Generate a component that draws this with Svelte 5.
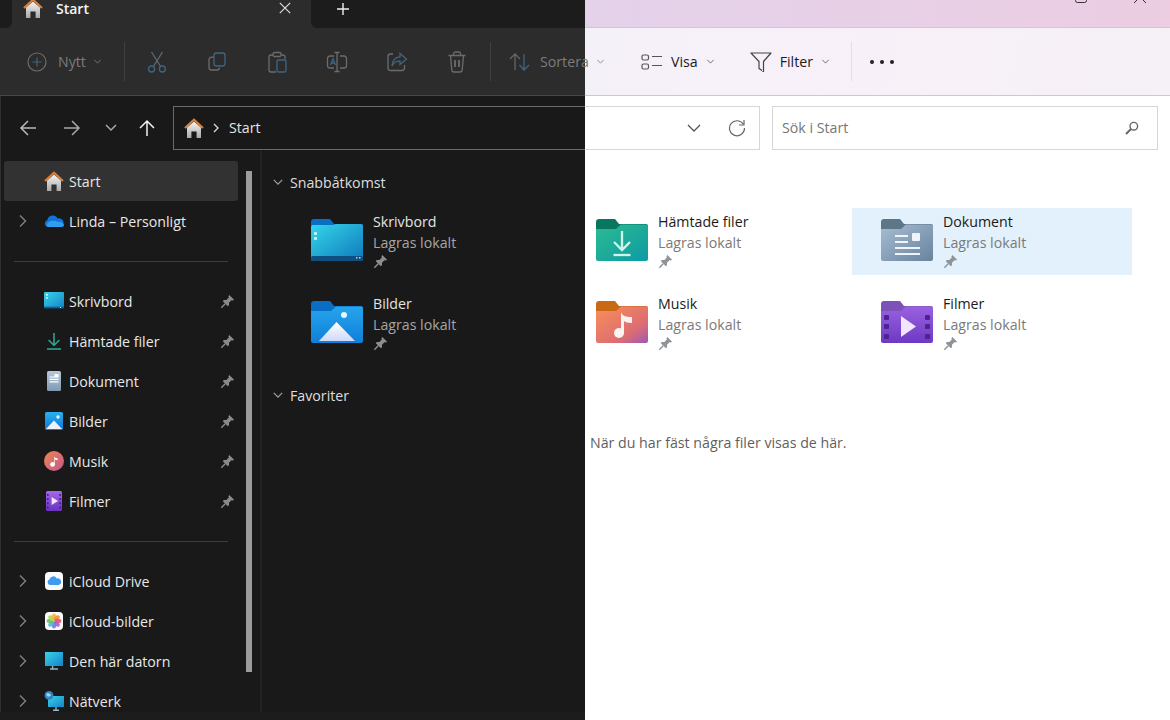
<script>
  const navTop = [
    { name: 'Start', icon: 'home', selected: true },
    { name: 'Linda – Personligt', icon: 'onedrive', expand: true }
  ]
  const navPinned = [
    { name: 'Skrivbord', icon: 'desktop' },
    { name: 'Hämtade filer', icon: 'download' },
    { name: 'Dokument', icon: 'document' },
    { name: 'Bilder', icon: 'pictures' },
    { name: 'Musik', icon: 'music' },
    { name: 'Filmer', icon: 'movies' }
  ]
  const navBottom = [
    { name: 'iCloud Drive', icon: 'icloud' },
    { name: 'iCloud-bilder', icon: 'photos' },
    { name: 'Den här datorn', icon: 'pc' },
    { name: 'Nätverk', icon: 'network' }
  ]
  const petals = ['#f6b73c', '#f58a3c', '#e8566b', '#b15fc4', '#6a7fe0', '#4fb7d8', '#62c26a', '#b8d44a']
  const toolPaths = ['cut', 'copy', 'paste', 'rename', 'share', 'delete']
</script>

{#snippet pin()}
  <svg class="pin" viewBox="0 0 16 16" width="15" height="15">
    <path d="M10 1 15 6 13.6 7 12.2 6.6 9.6 9.2 9.6 12 8.4 13 3 7.6 4 6.4 6.8 6.4 9.4 3.8 9 2.4Z" fill="currentColor" />
    <path d="M5.6 10.4 1.4 14.6" stroke="currentColor" stroke-width="1.5" />
  </svg>
{/snippet}

{#snippet chevron(size = 10)}
  <svg class="chev" viewBox="0 0 10 10" width={size} height={size}>
    <path d="M1.5 3.2 5 6.8 8.5 3.2" fill="none" stroke="currentColor" stroke-width="1" />
  </svg>
{/snippet}

{#snippet home(size = 20)}
  <svg viewBox="0 0 20 20" width={size} height={size}>
    <path d="M3 9.5 10 3.5 17 9.5V20H12.6V13.6H7.4V20H3Z" fill="url(#g-home)" />
    <path d="M1 10 10 1.8 19 10" fill="none" stroke="#d9813c" stroke-width="2.2" />
  </svg>
{/snippet}

{#snippet navIcon(name)}
  <svg viewBox="0 0 20 20" width="20" height="20">
    {#if name === 'home'}
      <path d="M3 9.5 10 3.5 17 9.5V20H12.6V13.6H7.4V20H3Z" fill="url(#g-home)" />
      <path d="M1 10 10 1.8 19 10" fill="none" stroke="#d9813c" stroke-width="2.2" />
    {:else if name === 'onedrive'}
      <path d="M4 16A3.6 3.6 0 0 1 3.4 9 5.4 5.4 0 0 1 13.6 7.6 4.4 4.4 0 0 1 16.6 16Z" fill="#1272d6" />
      <path d="M4 16A3 3 0 0 1 4.4 11C8 9 12 9.6 14 11 16 10.4 20 12 20 14.4 19.6 15.6 18 16 16.6 16Z" fill="#2f9ef0" />
    {:else if name === 'desktop'}
      <rect y="1" width="20" height="16" rx="1" fill="url(#g-desk)" />
      <rect y="15.6" width="20" height="1.8" fill="#0f5f96" />
      <rect x="2" y="3" width="2" height="1.6" fill="#d5f6fb" />
      <rect x="2" y="6" width="2" height="1.6" fill="#d5f6fb" />
      <rect x="16" y="16" width="1" height="1" fill="#cfefff" />
    {:else if name === 'download'}
      <path d="M10 2V14.4M4.6 9 10 14.4 15.4 9" fill="none" stroke="#2ea38f" stroke-width="1.6" />
      <path d="M3 18H17" stroke="#2ea38f" stroke-width="1.6" />
    {:else if name === 'document'}
      <rect x="3" y="0" width="14" height="20" rx="1.5" fill="url(#g-doc)" />
      <path d="M5.5 6H14.5M5.5 8.4H14.5M5.5 10.8H14.5" stroke="#fff" stroke-width="1.2" />
      <rect x="10.5" y="3" width="4" height="3" fill="#fff" />
    {:else if name === 'pictures'}
      <rect x="1" y="1" width="18" height="18" rx="1.5" fill="url(#g-pic)" />
      <circle cx="14" cy="6" r="1.7" fill="#e8f6ff" />
      <path d="M2 18 10 9.6 18 18Z" fill="#eef0ff" />
    {:else if name === 'music'}
      <circle cx="10" cy="10" r="10" fill="url(#g-music)" />
      <circle cx="8.6" cy="13.4" r="2.4" fill="#fff" />
      <path d="M10.2 13V5.4C11 7 12.8 7.2 13.6 7.2V9C12.4 9 11 8.6 10.8 8V13Z" fill="#fff" />
    {:else if name === 'movies'}
      <rect x="2" y="0" width="16" height="20" rx="1.5" fill="url(#g-film)" />
      <path d="M7.6 6 14 10 7.6 14Z" fill="#f3e6ff" />
      {#each [3, 7.2, 11.4, 15.6] as y}
        <rect x="3" {y} width="1.6" height="1.8" fill="#40197f" />
        <rect x="15.4" {y} width="1.6" height="1.8" fill="#40197f" />
      {/each}
    {:else if name === 'icloud'}
      <rect x="1" y="1" width="18" height="18" rx="4" fill="#fbfbfd" />
      <path d="M6 14A2.8 2.8 0 0 1 5.4 8.6 4 4 0 0 1 12.8 7.4 3.4 3.4 0 0 1 14.6 14Z" fill="#3f9bf0" />
    {:else if name === 'photos'}
      <rect x="1" y="1" width="18" height="18" rx="4" fill="#fbfbfd" />
      {#each petals as color, i}
        <ellipse cx="10" cy="6" rx="2.2" ry="3.4" fill={color} opacity="0.9" transform="rotate({i * 45} 10 10)" />
      {/each}
    {:else if name === 'pc'}
      <rect x="1" y="1" width="18" height="14" fill="url(#g-desk)" />
      <path d="M8.6 15V17.4M6 18H14" stroke="#8fb8c9" stroke-width="1.4" />
    {:else if name === 'network'}
      <rect x="4" y="5" width="16" height="11" fill="url(#g-desk)" />
      <path d="M12 16V18.5M9 19.2H15" stroke="#8fb8c9" stroke-width="1.4" />
      <circle cx="5" cy="4.4" r="4.4" fill="#2f87c8" />
      <path d="M2.4 2.6C4 2 6 2.4 7 4 6 6 4 6 2.8 5Z" fill="#9fd3ee" />
    {/if}
  </svg>
{/snippet}

{#snippet tool(name)}
  <svg viewBox="0 0 24 24" width="24" height="24" fill="none" stroke="#6c6c6c" stroke-width="1.3">
    {#if name === 'cut'}
      <path d="M6.5 2 15.6 16.5M17.5 2 8.4 16.5" stroke="#5e6b75" />
      <circle cx="6.6" cy="19" r="3" stroke="#3f6580" />
      <circle cx="17.4" cy="19" r="3" stroke="#3f6580" />
    {:else if name === 'copy'}
      <rect x="9" y="3" width="11" height="13" rx="2.5" stroke="#3f6580" />
      <path d="M9 7.2H6.5A2.5 2.5 0 0 0 4 9.7V17.5A2.5 2.5 0 0 0 6.5 20H12A2.5 2.5 0 0 0 14.4 17.6" />
    {:else if name === 'paste'}
      <path d="M8 5H6A2 2 0 0 0 4 7V20A2 2 0 0 0 6 22H11M16 5H18A2 2 0 0 1 20 7V9" />
      <rect x="8" y="2.5" width="8" height="4" rx="1.5" />
      <rect x="12" y="10" width="9" height="12" rx="1.5" stroke="#3f6580" />
    {:else if name === 'rename'}
      <path d="M9 6H5A2.5 2.5 0 0 0 2.500 8.500V15.500A2.500 2.500 0 0 0 5 18H9M15 6H19A2.500 2.500 0 0 1 21.500 8.500V15.500A2.500 2.500 0 0 1 19 18H15" />
      <path d="M12 3V21M9.500 2.500H14.500M9.500 21.500H14.500" />
      <path d="M5.500 15 8 8.800 10.500 15M6.400 13H9.600" stroke="#3f6580" />
    {:else if name === 'share'}
      <path d="M8 4H5.500A2.500 2.500 0 0 0 3 6.500V18A2.500 2.500 0 0 0 5.500 20.500H17A2.500 2.500 0 0 0 19.500 18V15" />
      <path d="M15 3.500 21.500 9 15 14.500V11.200C11 11 8.500 13 7 16 7 11 10 7 15 6.800Z" stroke="#3f6580" />
    {:else if name === 'delete'}
      <path d="M3.500 5.500H20.500M8.500 5.500V4A2 2 0 0 1 10.500 2H13.500A2 2 0 0 1 15.500 4V5.500" />
      <path d="M5.500 5.500 6.800 20A2.200 2.200 0 0 0 9 22H15A2.200 2.200 0 0 0 17.200 20L18.500 5.500" />
      <path d="M10 10V17M14 10V17" stroke-width="1.800" />
    {/if}
  </svg>
{/snippet}

{#snippet folder(kind)}
  <svg viewBox="0 0 52 42" width="52" height="42">
    {#if kind === 'desk'}
      <path d="M0 3A3 3 0 0 1 3 0H19L23 5H50A2 2 0 0 1 52 7V24H0Z" fill="#0a6fc4" />
      <path d="M0 8A2 2 0 0 1 2 6H22L25 5H50A2 2 0 0 1 52 7V40A2 2 0 0 1 50 42H2A2 2 0 0 1 0 40Z" fill="url(#g-fdesk)" />
      <rect y="37" width="52" height="5" rx="2" fill="#0e4f80" />
      <rect x="3" y="13" width="3" height="3" rx="1" fill="#c7f3fa" />
      <rect x="3" y="18" width="3" height="3" rx="1" fill="#c7f3fa" />
      <rect x="45" y="38" width="1.500" height="1.500" fill="#a5e2f5" />
      <rect x="48" y="38" width="1.500" height="1.500" fill="#a5e2f5" />
    {:else if kind === 'pic'}
      <path d="M0 3A3 3 0 0 1 3 0H19L23 5H50A2 2 0 0 1 52 7V24H0Z" fill="#0a6fc4" />
      <path d="M0 10H20L25 5.500H50A2 2 0 0 1 52 7.500V40A2 2 0 0 1 50 42H2A2 2 0 0 1 0 40Z" fill="url(#g-fpic)" />
      <circle cx="33" cy="14" r="3" fill="#e6f5ff" />
      <path d="M8 40 25.500 21 44 40Z" fill="url(#g-mount)" />
    {:else if kind === 'down'}
      <path d="M0 3A3 3 0 0 1 3 0H19L23 5H50A2 2 0 0 1 52 7V24H0Z" fill="#07785f" />
      <path d="M0 10H20L25 5.500H50A2 2 0 0 1 52 7.500V40A2 2 0 0 1 50 42H2A2 2 0 0 1 0 40Z" fill="url(#g-fdown)" />
      <path d="M26 12V31M18 23 26 31 34 23" fill="none" stroke="#cdf5ec" stroke-width="2.300" />
      <path d="M17.500 36H34.500" stroke="#cdf5ec" stroke-width="2.300" />
    {:else if kind === 'music'}
      <path d="M0 3A3 3 0 0 1 3 0H19L23 5H50A2 2 0 0 1 52 7V24H0Z" fill="#c86a14" />
      <path d="M0 10H20L25 5.500H50A2 2 0 0 1 52 7.500V40A2 2 0 0 1 50 42H2A2 2 0 0 1 0 40Z" fill="url(#g-fmusic)" />
      <circle cx="23" cy="32" r="5" fill="#fbf3f1" />
      <path d="M25 32V11C26 15 30 16 36 16V22C32 22 29 21 28 20V32Z" fill="#fbf3f1" />
    {:else if kind === 'doc'}
      <path d="M0 3A3 3 0 0 1 3 0H19L23 5H50A2 2 0 0 1 52 7V24H0Z" fill="#5d7688" />
      <path d="M0 10H20L25 5.500H50A2 2 0 0 1 52 7.500V40A2 2 0 0 1 50 42H2A2 2 0 0 1 0 40Z" fill="url(#g-fdoc)" />
      <path d="M14 17H27M14 23H27M14 29H39M14 35H39" stroke="#eef4f9" stroke-width="2" />
      <rect x="31" y="14" width="8" height="8" rx="1" fill="#eef4f9" />
    {:else if kind === 'film'}
      <path d="M0 3A3 3 0 0 1 3 0H19L23 5H50A2 2 0 0 1 52 7V24H0Z" fill="#7c52b8" />
      <path d="M0 10H20L25 5.500H50A2 2 0 0 1 52 7.500V40A2 2 0 0 1 50 42H2A2 2 0 0 1 0 40Z" fill="url(#g-ffilm)" />
      <path d="M20 15 35 25.500 20 36Z" fill="#f1e6ff" />
      {#each [14, 23, 33] as y}
        <rect x="3" {y} width="5" height="5" rx="1" fill="#4a2590" />
        <rect x="44" {y} width="5" height="5" rx="1" fill="#4a2590" />
      {/each}
    {/if}
  </svg>
{/snippet}

{#snippet tile(kind, name)}
  <div class="tile">
    {@render folder(kind)}
    <div class="tile-text">
      <div class="tile-name">{name}</div>
      <div class="tile-sub">Lagras lokalt</div>
      <div class="tile-pin">{@render pin()}</div>
    </div>
  </div>
{/snippet}

{#snippet navRow(item, pinned)}
  <div class="nav-row" class:selected={item.selected}>
    <span class="expander">
      {#if item.expand}
        <svg viewBox="0 0 10 14" width="10" height="14"><path d="M2 1.500 7.500 7 2 12.500" fill="none" stroke="#7d7d7d" stroke-width="1.500" /></svg>
      {/if}
    </span>
    {@render navIcon(item.icon)}
    <span class="nav-name">{item.name}</span>
    {#if pinned}{@render pin()}{/if}
  </div>
{/snippet}

<svg class="defs" width="0" height="0" aria-hidden="true">
  <defs>
    <linearGradient id="g-home" x1="0" y1="0" x2="0" y2="1"><stop offset="0" stop-color="#f4f4f4" /><stop offset="1" stop-color="#a9a9a9" /></linearGradient>
    <linearGradient id="g-desk" x1="0" y1="0" x2="1" y2="1"><stop offset="0" stop-color="#38d3e8" /><stop offset="1" stop-color="#1484c8" /></linearGradient>
    <linearGradient id="g-doc" x1="0" y1="0" x2="0" y2="1"><stop offset="0" stop-color="#b6c8da" /><stop offset="1" stop-color="#7f9ab2" /></linearGradient>
    <linearGradient id="g-pic" x1="0" y1="0" x2="0" y2="1"><stop offset="0" stop-color="#29b0f0" /><stop offset="1" stop-color="#0d78d2" /></linearGradient>
    <linearGradient id="g-music" x1="0" y1="0" x2="1" y2="1"><stop offset="0" stop-color="#f0854e" /><stop offset="1" stop-color="#c05a90" /></linearGradient>
    <linearGradient id="g-film" x1="0" y1="0" x2="0" y2="1"><stop offset="0" stop-color="#a468e8" /><stop offset="1" stop-color="#6a32c0" /></linearGradient>
    <linearGradient id="g-fdesk" x1="0" y1="0" x2="1" y2="1"><stop offset="0" stop-color="#35d6ea" /><stop offset="1" stop-color="#0e78bc" /></linearGradient>
    <linearGradient id="g-fpic" x1="0" y1="0" x2="0" y2="1"><stop offset="0" stop-color="#27a4ec" /><stop offset="1" stop-color="#0f7fd8" /></linearGradient>
    <linearGradient id="g-mount" x1="0" y1="0" x2="0" y2="1"><stop offset="0" stop-color="#ffffff" /><stop offset="1" stop-color="#cfd9f8" /></linearGradient>
    <linearGradient id="g-fdown" x1="0" y1="0" x2="1" y2="1"><stop offset="0" stop-color="#2dbb91" /><stop offset="1" stop-color="#0d9aa4" /></linearGradient>
    <linearGradient id="g-fmusic" x1="0" y1="0" x2="1" y2="1"><stop offset="0" stop-color="#f98f57" /><stop offset="0.7" stop-color="#dc6c74" /><stop offset="1" stop-color="#9c58b4" /></linearGradient>
    <linearGradient id="g-fdoc" x1="0" y1="0" x2="1" y2="1"><stop offset="0" stop-color="#a9bdd2" /><stop offset="1" stop-color="#66839e" /></linearGradient>
    <linearGradient id="g-ffilm" x1="0" y1="0" x2="0" y2="1"><stop offset="0" stop-color="#9a62e0" /><stop offset="1" stop-color="#6d38c4" /></linearGradient>
  </defs>
</svg>

<div class="window">
  <section class="pane dark">
    <div class="tabbar">
      <div class="tab-gutter"></div>
      <div class="tab">
        {@render home(20)}
        <span class="tab-title">Start</span>
        <svg class="tab-close" viewBox="0 0 12 12" width="12" height="12"><path d="M.8.8 11.200 11.200M11.200.8.8 11.200" stroke="#e4e4e4" stroke-width="1.100" /></svg>
      </div>
      <div class="tab-rest">
        <svg class="tab-add" viewBox="0 0 12 12" width="12" height="12"><path d="M6 0V12M0 6H12" stroke="#f0f0f0" stroke-width="1.400" /></svg>
      </div>
    </div>

    <div class="toolbar">
      <div class="new-btn">
        <svg viewBox="0 0 20 20" width="20" height="20" fill="none">
          <circle cx="10" cy="10" r="9" stroke="#6c6c6c" stroke-width="1.200" />
          <path d="M10 5.500V14.500M5.500 10H14.500" stroke="#3f6580" stroke-width="1.200" />
        </svg>
        <span>Nytt</span>
        {@render chevron(9)}
      </div>
      <div class="sep"></div>
      {#each toolPaths as name}
        <div class="tool">{@render tool(name)}</div>
      {/each}
      <div class="sep"></div>
      <div class="sort-btn">
        <svg viewBox="0 0 22 20" width="22" height="20" fill="none" stroke-width="1.300">
          <path d="M6 18V2M1 7 6 2 11 7" stroke="#666" />
          <path d="M15 2V18M10.500 13 15 18 20 13" stroke="#3f6580" />
        </svg>
        <span>Sortera</span>
      </div>
    </div>

    <div class="addressrow">
      <div class="nav-buttons">
        <svg viewBox="0 0 18 18" width="18" height="18" fill="none" stroke="#b8b8b8" stroke-width="1.500"><path d="M17 9H2M9 2 2 9 9 16" /></svg>
        <svg class="fwd" viewBox="0 0 18 18" width="18" height="18" fill="none" stroke="#a8a8a8" stroke-width="1.500"><path d="M1 9H16M9 2 16 9 9 16" /></svg>
        <svg class="recent" viewBox="0 0 12 8" width="12" height="8" fill="none" stroke="#a8a8a8" stroke-width="1.500"><path d="M1 1 6 6 11 1" /></svg>
        <svg class="up" viewBox="0 0 18 18" width="18" height="18" fill="none" stroke="#f2f2f2" stroke-width="1.500"><path d="M9 17V2M2 9 9 2 16 9" /></svg>
      </div>
      <div class="crumbs">
        {@render home(20)}
        <svg class="crumb-sep" viewBox="0 0 6 10" width="6" height="10" fill="none" stroke="#dcdcdc" stroke-width="1.300"><path d="M1 1 5 5 1 9" /></svg>
        <span>Start</span>
      </div>
    </div>

    <div class="content">
      <aside class="sidebar">
        <div class="nav">
          {#each navTop as item}{@render navRow(item, false)}{/each}
          <div class="nav-divider first"></div>
          {#each navPinned as item}{@render navRow(item, true)}{/each}
          <div class="nav-divider"></div>
          {#each navBottom as item}{@render navRow({ ...item, expand: true }, false)}{/each}
        </div>
        <div class="scrollbar"></div>
      </aside>

      <main class="main">
        <div class="section-head">{@render chevron(12)}<span>Snabbåtkomst</span></div>
        <div class="tiles-left">
          {@render tile('desk', 'Skrivbord')}
          {@render tile('pic', 'Bilder')}
        </div>
        <div class="section-head favorites">{@render chevron(12)}<span>Favoriter</span></div>
      </main>
    </div>
    <div class="statusbar"></div>
  </section>

  <section class="pane light">
    <div class="tabbar">
      <svg class="win-max" viewBox="0 0 12 3" width="12" height="3"><path d="M.5 0V.5A2 2 0 0 0 2.500 2.500H9.500A2 2 0 0 0 11.500.5V0" fill="none" stroke="#333" /></svg>
      <svg class="win-close" viewBox="0 0 12 3" width="12" height="3"><path d="M3 0 0 3M9 0 12 3" stroke="#333" /></svg>
    </div>

    <div class="toolbar">
      <span class="sort-chev">{@render chevron(9)}</span>
      <div class="btn view">
        <svg viewBox="0 0 22 18" width="22" height="18" fill="none" stroke="#555" stroke-width="1.200">
          <rect x="1" y="2" width="6.500" height="5" rx="1.500" />
          <rect x="1" y="11" width="6.500" height="5" rx="1.500" />
          <path d="M11 3.500H21M11 12.500H21" />
        </svg>
        <span>Visa</span>
        {@render chevron(9)}
      </div>
      <div class="btn filter">
        <svg viewBox="0 0 22 22" width="22" height="22" fill="none" stroke="#444" stroke-width="1.200"><path d="M1 2H21L13.500 10.500V20.500L9 17.500V10.500Z" stroke-linejoin="round" /></svg>
        <span>Filter</span>
        {@render chevron(9)}
      </div>
      <div class="sep"></div>
      <div class="more"><i></i><i></i><i></i></div>
    </div>

    <div class="addressrow">
      <div class="address-end">
        <svg viewBox="0 0 14 8" width="14" height="8" fill="none" stroke="#555" stroke-width="1.300"><path d="M1 1 7 7 13 1" /></svg>
        <svg class="refresh" viewBox="0 0 18 18" width="18" height="18" fill="none" stroke="#666" stroke-width="1.200"><path d="M15.500 5.500A7.500 7.500 0 1 0 16.500 9" /><path d="M16 1V6H11" /></svg>
      </div>
      <div class="search">
        <span>Sök i Start</span>
        <svg viewBox="0 0 14 14" width="14" height="14" fill="none" stroke="#666" stroke-width="1.400"><circle cx="8.800" cy="5.200" r="3.800" /><path d="M6 8 1 13" stroke-width="2" /></svg>
      </div>
    </div>

    <div class="tiles-right">
      {@render tile('down', 'Hämtade filer')}
      <div class="highlight">{@render tile('doc', 'Dokument')}</div>
      {@render tile('music', 'Musik')}
      <div>{@render tile('film', 'Filmer')}</div>
    </div>
    <p class="empty">När du har fäst några filer visas de här.</p>
  </section>
</div>

<style>
  :global(body) {
    margin: 0;
    background: #fff;
    overflow: hidden;
  }

  .defs {
    position: absolute;
  }

  svg {
    display: block;
    flex: none;
  }

  .window {
    display: flex;
    width: 1170px;
    height: 720px;
    overflow: hidden;
    font-family: "Open Sans", Roboto, sans-serif;
    font-size: 14.2px;
  }

  .pane {
    display: flex;
    flex-direction: column;
    min-width: 0;
  }

  .dark {
    width: 585px;
    flex: none;
    position: relative;
    z-index: 1;
    background: #191919;
    color: #e4e4e4;
    box-shadow: inset 1px 0 #2e2e33;
  }

  .light {
    flex: 1;
    background: #fff;
    color: #1b1b1b;
  }

  .tabbar {
    height: 28px;
    flex: none;
    display: flex;
    overflow: hidden;
  }

  .dark .tabbar {
    background: #2c2c2c;
  }

  .light .tabbar {
    background: linear-gradient(90deg, #e4d2ea, #e8d0e6 55%, #eccde2);
    border-bottom: 1px solid #d5c4d4;
    box-sizing: border-box;
    justify-content: flex-end;
  }

  .tab-gutter {
    width: 12px;
    flex: none;
    background: #1c1c1c;
    border-bottom-right-radius: 6px;
  }

  .tab {
    width: 299px;
    flex: none;
    box-sizing: border-box;
    padding: 0 20px 12px 11px;
    display: flex;
    align-items: center;
  }

  .tab-rest {
    flex: 1;
    background: #1c1c1c;
    border-bottom-left-radius: 6px;
    padding: 3px 0 0 26px;
  }

  .tab-title {
    margin-left: 13px;
    font-weight: 600;
    font-size: 14px;
    color: #f4f4f4;
  }

  .tab-close {
    margin-left: auto;
  }

  .toolbar {
    height: 68px;
    flex: none;
    box-sizing: border-box;
    display: flex;
    align-items: center;
    border-bottom: 1px solid #48484a;
  }

  .dark .toolbar {
    background: #2c2c2c;
    color: #7c7c7c;
    padding-left: 27px;
  }

  .light .toolbar {
    background: linear-gradient(100deg, #f5f1f8, #f8f0f8 50%, #f5f1f6);
    border-bottom-color: #cbc8ce;
  }

  .new-btn {
    display: flex;
    align-items: center;
    width: 97px;
    flex: none;
  }

  .new-btn span {
    margin-left: 11px;
  }

  .new-btn :global(.chev) {
    margin-left: 7px;
  }

  .sep {
    width: 1px;
    height: 39px;
    flex: none;
    background: #404040;
  }

  .light .sep {
    background: #e3dfe6;
    margin-left: 21px;
  }

  .tool {
    width: 60px;
    display: flex;
    justify-content: center;
    flex: none;
  }

  .sep + .tool {
    margin-left: 2px;
  }

  .tool + .sep {
    margin-left: 3px;
  }

  .sort-btn {
    display: flex;
    align-items: center;
    white-space: nowrap;
    margin-left: 18px;
  }

  .sort-btn span {
    margin-left: 9px;
  }

  .sort-chev {
    margin-left: 11px;
    color: #888;
  }

  .btn {
    display: flex;
    align-items: center;
    gap: 8px;
  }

  .btn :global(.chev) {
    color: #666;
  }

  .view {
    margin-left: 36px;
  }

  .filter {
    margin-left: 35px;
  }

  .more {
    margin-left: 18px;
    display: flex;
    gap: 6px;
  }

  .more i {
    width: 4px;
    height: 4px;
    border-radius: 50%;
    background: #222;
  }

  .addressrow {
    height: 54px;
    flex: none;
    box-sizing: border-box;
    padding-top: 10px;
    display: flex;
  }

  .nav-buttons {
    width: 173px;
    flex: none;
    height: 44px;
    box-sizing: border-box;
    padding-left: 19px;
    display: flex;
    align-items: center;
  }

  .fwd {
    margin-left: 26px;
  }

  .recent {
    margin-left: 24px;
  }

  .up {
    margin-left: 21px;
  }

  .crumbs {
    flex: 1;
    height: 44px;
    box-sizing: border-box;
    border: 1px solid #6a6a6a;
    border-right: 0;
    padding-left: 10px;
    display: flex;
    align-items: center;
  }

  .crumb-sep {
    margin-left: 9px;
  }

  .crumbs span {
    margin: -1px 0 0 10px;
  }

  .address-end {
    width: 175px;
    height: 44px;
    flex: none;
    box-sizing: border-box;
    border: 1px solid #d6d6d6;
    border-left: 0;
    padding-left: 102px;
    display: flex;
    align-items: center;
  }

  .refresh {
    margin-left: 27px;
  }

  .search {
    width: 386px;
    height: 44px;
    margin-left: 12px;
    box-sizing: border-box;
    border: 1px solid #d6d6d6;
    padding: 0 18px 0 9px;
    display: flex;
    align-items: center;
    justify-content: space-between;
    color: #767676;
  }

  .search span {
    margin-top: -1px;
  }

  .content {
    flex: 1;
    min-height: 0;
    display: flex;
    overflow: hidden;
  }

  .statusbar {
    height: 8px;
    flex: none;
    background: #1c1c1c;
  }

  .sidebar {
    width: 262px;
    flex: none;
    box-sizing: border-box;
    padding: 11px 0 0 4px;
    display: flex;
    border-right: 2px solid #212121;
  }

  .nav {
    width: 234px;
    flex: none;
  }

  .nav-row {
    height: 40px;
    display: flex;
    align-items: center;
    padding-right: 3px;
    box-sizing: border-box;
    color: #e8e8e8;
  }

  .nav-row.selected {
    background: #323232;
    border-radius: 3px;
  }

  .expander {
    width: 40px;
    flex: none;
    padding-left: 14px;
    box-sizing: border-box;
  }

  .nav-name {
    flex: 1;
    margin-left: 5px;
    white-space: nowrap;
  }

  .nav :global(.pin) {
    color: #8a8a8a;
  }

  .nav-divider {
    height: 1px;
    margin: 20px 10px 19px 10px;
    background: #3d3d3d;
  }

  .scrollbar {
    width: 6px;
    height: 501px;
    margin: 10px 0 0 8px;
    background: #9c9c9c;
  }

  .main {
    flex: 1;
    padding: 22px 0 0 10px;
    min-width: 0;
  }

  .section-head {
    display: flex;
    align-items: center;
    gap: 6px;
    height: 20px;
    color: #dedede;
  }

  .section-head :global(.chev) {
    color: #a0a0a0;
  }

  .favorites {
    margin-top: 28px;
  }

  .tiles-left {
    margin: 16px 0 0 10px;
    display: flex;
    flex-direction: column;
    gap: 15px;
  }

  .tile {
    height: 67px;
    box-sizing: border-box;
    padding: 3px 0 0 29px;
    display: flex;
    gap: 10px;
  }

  .tile > :global(svg) {
    margin-top: 8px;
  }

  .tile-text {
    line-height: 21px;
  }

  .tile-sub {
    color: #a6a6a6;
  }

  .tile-pin {
    color: #8e8e8e;
    padding-top: 1px;
  }

  .light .tile-name {
    color: #1a1a1a;
  }

  .light .tile-sub {
    color: #7a7a7a;
  }

  .light .tile-pin {
    color: #8f9498;
  }

  .tiles-right {
    margin-top: 58px;
    display: grid;
    grid-template-columns: 262px 280px;
    grid-auto-rows: 67px;
    row-gap: 15px;
    column-gap: 5px;
  }

  .tiles-right > :global(.tile) {
    padding-left: 11px;
  }

  .highlight {
    background: #e3f1fc;
  }

  .empty {
    margin: 76px 0 0 5px;
    line-height: 20px;
    color: #5f5f5f;
  }

  .win-max {
    margin-right: 47px;
  }

  .win-close {
    margin-right: 24px;
  }
</style>
